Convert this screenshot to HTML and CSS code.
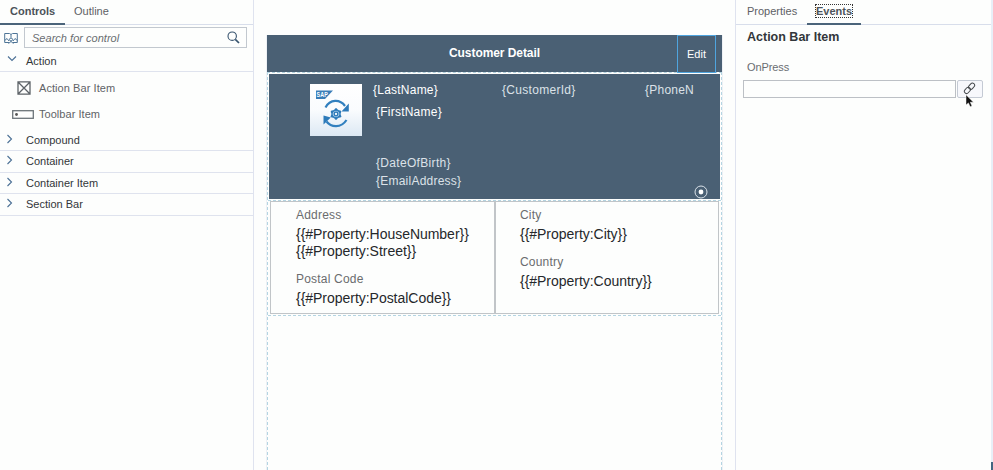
FILE: index.html
```html
<!DOCTYPE html>
<html lang="en">
<head>
<meta charset="utf-8">
<title>Control Editor</title>
<link rel="stylesheet" href="styles.css">
</head>
<body>
<div class="app">
  <aside class="palette">
    <nav class="tabs">
      <span class="tab tab-controls active"><span>Controls</span></span>
      <span class="tab tab-outline"><span>Outline</span></span>
    </nav>
    <div class="search-row">
      <svg class="map-icon" width="14" height="13" viewBox="0 0 14 13" fill="none" stroke="#4d7496"><path d="M5 10.500H.7V1.500H5.500L7 2.500 8.500 1.500H13.300V10.500H9M7 2.500V5.500"/><path d="M.7 8.500L3 6.500 5 9M13.300 8.500L11 6.500 9 9"/><circle cx="7" cy="7.500" r="1.500"/><path d="M4.500 11.500L7 9.500 9.500 11.500"/></svg>
      <div class="search"><span>Search for control</span>
        <svg width="13" height="13" viewBox="0 0 13 13" fill="none" stroke="#37536e"><circle cx="5.200" cy="5.200" r="4.200" stroke-width="1.100"/><path d="M8.300 8.300L12 12" stroke-width="1.700"/></svg>
      </div>
    </div>
    <div class="group group-action"><svg class="chev" width="10" height="8" viewBox="0 0 10 8"><path d="M1 1.500L5 5.500 9 1.500"/></svg><span>Action</span></div>
    <div class="item item-bar"><svg width="14" height="14" viewBox="0 0 14 14" fill="none" stroke="#5c6267"><path d="M1 .8H13V13.200H1ZM1 1L13 13M13 1L1 13" stroke-width="1.300"/></svg><span>Action Bar Item</span></div>
    <div class="item item-tool"><svg width="22" height="9" viewBox="0 0 22 9" fill="none" stroke="#6c7479"><rect x=".7" y=".7" width="20.600" height="7.600" stroke-width="1.300"/><circle cx="4.500" cy="4.500" r="1.400" fill="#555" stroke="none"/></svg><span>Toolbar Item</span></div>
    <div class="group group-first"><svg class="chev" width="10" height="10" viewBox="0 0 10 10"><path d="M2.500 1L6.500 5 2.500 9"/></svg><span>Compound</span></div>
    <div class="group"><svg class="chev" width="10" height="10" viewBox="0 0 10 10"><path d="M2.500 1L6.500 5 2.500 9"/></svg><span>Container</span></div>
    <div class="group"><svg class="chev" width="10" height="10" viewBox="0 0 10 10"><path d="M2.500 1L6.500 5 2.500 9"/></svg><span>Container Item</span></div>
    <div class="group"><svg class="chev" width="10" height="10" viewBox="0 0 10 10"><path d="M2.500 1L6.500 5 2.500 9"/></svg><span>Section Bar</span></div>
  </aside>

  <main class="stage">
    <div class="page">
      <header class="bar"><span class="title">Customer Detail</span><span class="edit">Edit</span></header>
      <div class="canvas">
        <section class="profile">
          <svg class="logo" width="52" height="52" viewBox="0 0 52 52">
            <defs>
              <linearGradient id="tile" x1="0" y1="0" x2="0" y2="1"><stop offset="0" stop-color="#fff"/><stop offset=".5" stop-color="#fafcfe"/><stop offset="1" stop-color="#dce8f3"/></linearGradient>
            </defs>
            <rect width="52" height="52" fill="url(#tile)"/>
            <path d="M6 6.500H23L15 15H6Z" fill="#3a7db8"/>
            <text x="6.500" y="13" class="sap" textLength="11.500" lengthAdjust="spacingAndGlyphs">SAP</text>
            <g fill="none" stroke="#3280bf" stroke-width="2.200"><path d="M15.500 23.500C20 15 30 15 35 22"/><path d="M36.500 36C31 44.500 21 43.500 16.500 37.500"/></g>
            <path d="M38.800 19.500V27.500H31.500ZM13.500 31.500V40.500L20.800 33.500Z" fill="#2d7ab9"/>
            <path d="M26 25.500L30 27.800V32.200L26 34.500 22 32.200V27.800Z" fill="#a9cbe5" stroke="#3280bf" stroke-width="1.500"/><circle cx="26" cy="30" r="1.800" fill="#f4f9fd" stroke="#2d7ab9" stroke-width="1.300"/>
            <g fill="#2d7ab9"><circle cx="26" cy="25.500" r="1.300"/><circle cx="30" cy="27.800" r="1.300"/><circle cx="30" cy="32.200" r="1.300"/><circle cx="26" cy="34.500" r="1.300"/><circle cx="22" cy="32.200" r="1.300"/><circle cx="22" cy="27.800" r="1.300"/></g>
          </svg>
          <div class="names">
            <span class="last">{LastName}</span>
            <span class="first">{FirstName}</span>
            <span class="dob">{DateOfBirth}</span>
            <span class="mail">{EmailAddress}</span>
          </div>
          <span class="cust">{CustomerId}</span>
          <span class="phone">{PhoneN</span>
          <svg class="dot" width="14" height="14" viewBox="0 0 14 14"><circle cx="7" cy="7" r="6" fill="none" stroke="#dbe3ea"/><circle cx="7" cy="7" r="2.400" fill="#fff"/></svg>
        </section>
        <section class="details">
          <div class="cell">
            <span class="label">Address</span>
            <span class="value">{{#Property:HouseNumber}}</span>
            <span class="value">{{#Property:Street}}</span>
            <span class="label next">Postal Code</span>
            <span class="value">{{#Property:PostalCode}}</span>
          </div>
          <div class="cell">
            <span class="label">City</span>
            <span class="value">{{#Property:City}}</span>
            <span class="label next">Country</span>
            <span class="value">{{#Property:Country}}</span>
          </div>
        </section>
      </div>
    </div>
  </main>

  <aside class="inspector">
    <nav class="tabs">
      <span class="tab tab-properties"><span>Properties</span></span>
      <span class="tab tab-events active"><span>Events</span></span>
    </nav>
    <h2><span>Action Bar Item</span></h2>
    <label><span>OnPress</span></label>
    <div class="field">
      <div class="input"></div>
      <div class="link-btn">
        <svg width="13" height="13" viewBox="0 0 13 13" fill="none" stroke="#45494d"><rect x="-3.400" y="-2.200" width="6.800" height="4.400" rx="2.200" transform="translate(8.600 4.200) rotate(-48)"/><rect x="-3.400" y="-2.200" width="6.800" height="4.400" rx="2.200" transform="translate(4.400 8.400) rotate(-48)"/></svg>
        <svg class="pointer" width="10" height="14" viewBox="0 0 10 14"><path d="M1 .8V11L3.400 8.900 5.200 12.800 7 12 5.300 8.200H8.500Z" fill="#111" stroke="#fff" stroke-width=".5"/></svg>
      </div>
    </div>
  </aside>
  <div class="gutter"></div>
</div>
</body>
</html>
```
FILE: styles.css
```css
* { box-sizing: border-box; }
body { margin: 0; background: #fdfefd; font-family: "Liberation Sans", Arial, sans-serif; font-size: 11px; color: #32363a; overflow: hidden; }
span { white-space: nowrap; }
.app { display: flex; height: 470px; }

.palette { width: 254px; border-right: 1px solid #dfe3ef; }
.tabs { display: flex; height: 25px; border-bottom: 1px solid #d8deeb; }
.tab { height: 25px; line-height: 23px; color: #5d6165; border-bottom: 2px solid transparent; }
.tab.active { font-weight: bold; color: #4c5359; border-bottom-color: #4b647a; }
.tab-controls { width: 65px; padding-left: 10px; }
.tab-outline { padding-left: 9px; }
.search-row { display: flex; height: 24px; padding: 2px 6px 0 4px; gap: 6px; }
.map-icon { margin-top: 5px; }
.search { flex: 1; height: 21px; display: flex; align-items: center; justify-content: space-between; padding: 0 6px 0 7px; border: 1px solid #c2c8cf; font-style: italic; color: #696d71; letter-spacing: .02px; }
.group { display: flex; align-items: center; height: 21.600px; border-bottom: 1px solid #dfe3ee; padding-left: 5px; gap: 11px; }
.group-action { height: 23px; padding-left: 7px; gap: 9px; }
.group-action span { position: relative; top: 1px; }
.group-first { height: 22px; }
.chev { fill: none; stroke: #4b7095; stroke-width: 1.100; position: relative; top: -1px; }
.item { display: flex; align-items: center; color: #5f6367; letter-spacing: .07px; }
.item-bar { height: 31px; padding-left: 17px; gap: 8px; }
.item-tool { height: 22px; margin-bottom: 4px; padding-left: 12px; gap: 5px; letter-spacing: .04px; }

.stage { width: 482px; border-right: 1px solid #dfe3ef; padding: 35px 13px 0 12px; }
.page { display: flex; flex-direction: column; width: 457px; height: 435px; border-left: 1px solid #eef1f5; border-right: 1px solid #eef1f5; }
.bar { display: flex; height: 37px; background: #4a6074; color: #fff; justify-content: flex-end; }
.title { flex: 1; padding-left: 182px; font-size: 12px; letter-spacing: -.07px; font-weight: bold; line-height: 36px; }
.edit { width: 39px; height: 38px; margin-right: 6px; border: 1px solid #4fa5df; text-align: center; line-height: 37px; position: relative; z-index: 1; }
.canvas { flex: 1; border: 1px dashed #b4d5e2; border-bottom: 0; }
.profile { position: relative; display: flex; height: 125px; margin: 1px 1px 0; background: #4a6074; color: #dce2e8; font-size: 12px; letter-spacing: .23px; padding: 10px 0 0 41px; }
.logo { flex: none; }
.names { display: flex; flex-direction: column; width: 140px; padding-left: 14px; margin-top: -1px; line-height: 14px; }
.last { margin-left: -3px; color: #fff; }
.first { color: #fff; margin-top: 8px; }
.dob { margin-top: 37px; letter-spacing: .32px; }
.mail { margin-top: 4px; }
.cust { width: 143px; margin-top: -1px; line-height: 14px; letter-spacing: .3px; }
.phone { width: 50px; margin-top: -1px; line-height: 14px; }
.dot { position: absolute; right: 12px; bottom: 0; }
.details { display: grid; grid-template-columns: 225px 1fr; height: 116px; border-bottom: 1px dashed #b4d5e2; border-top: 1px dashed #b4d5e2; margin-top: 1px; padding: 0 2px 1px 2px; }
.cell { display: flex; flex-direction: column; border: 1px solid #c1c5c8; padding: 5px 0 0 25px; }
.cell + .cell { padding-left: 24px; }
.label { font-size: 12px; line-height: 17px; color: #6a6c6e; letter-spacing: .2px; }
.value { font-size: 14px; line-height: 17px; color: #25282b; letter-spacing: -.03px; }
.label + .value { margin-top: 2px; }
.next { margin-top: 11px; }

.inspector { width: 255px; }
.inspector .tabs { padding-left: 11px; }
.tab-properties { width: 60px; }
.tab-events { width: 54px; padding-left: 9px; line-height: 23px; }
.tab-events span { outline: 1px dotted #333; }
h2 { margin: 5px 0 0 11px; font-size: 12.500px; line-height: 15px; }
label { display: block; margin: 15px 0 0 11px; line-height: 14px; color: #696d71; letter-spacing: -.1px; }
.field { display: flex; gap: 1px; margin: 6px 0 0 7px; }
.input { width: 213px; height: 18px; border: 1px solid #bcc0c5; }
.link-btn { position: relative; width: 26px; height: 18px; border: 1px solid #c4cad4; border-radius: 2px; background: #f7f8fc; padding: 1px 0 0 5px; }
.link-btn svg { display: block; }
.link-btn .pointer { position: absolute; left: 7px; top: 13px; }
.gutter { width: 2px; height: 470px; background: linear-gradient(#e8eff7 462px, #446681 462px); }
.sap { font-size: 7px; font-weight: bold; fill: #fff; }
```
